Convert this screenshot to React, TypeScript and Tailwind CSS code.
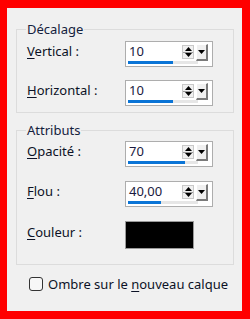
import React from "react";

const font = { fontFamily: '"Noto Sans", "Open Sans", sans-serif' };

function Spin({ value, bar }: { value: string; bar: number }) {
  return (
    <div className="flex h-[26px] w-[88px] flex-col border border-[#adadad] bg-white pl-[2px] pr-[4px] pt-[2px] pb-[2px]">
      <div className="flex h-[17px] items-start">
        <div className="flex-1 text-[13px] leading-[17px] text-[#1a1a40] pl-[1px] -mt-[1px]">{value}</div>
        <div className="mt-[1px] flex h-[14px] w-[12px] flex-col border border-[#c8c8c8] bg-[#f0f0f0]">
          <div className="flex flex-1 items-center justify-center border-b border-[#9a9a9a]">
            <svg width="7" height="4" viewBox="0 0 7 4"><path d="M3.5 0 L7 4 L0 4 Z" fill="#000" /></svg>
          </div>
          <div className="flex flex-1 items-center justify-center">
            <svg width="7" height="4" viewBox="0 0 7 4"><path d="M0 0 L7 0 L3.5 4 Z" fill="#000" /></svg>
          </div>
        </div>
        <div className="ml-[2px] flex h-[17px] w-[12px] items-center justify-center border-t border-l border-t-white border-l-white border-r-2 border-b-2 border-r-[#7a7a7a] border-b-[#7a7a7a] bg-[#f0f0f0]">
          <svg width="7" height="4" viewBox="0 0 7 4"><path d="M0 0 L7 0 L3.5 4 Z" fill="#000" /></svg>
        </div>
      </div>
      <div className="h-[3px] w-[70px] bg-[#e6e6e6]">
        <div className="h-full bg-[#0a74d6]" style={{ width: bar }} />
      </div>
    </div>
  );
}

function U({ c }: { c: string }) {
  return <span className="underline underline-offset-[2px] decoration-[1px]">{c}</span>;
}

export default function App() {
  return (
    <div className="h-[319px] w-[250px] bg-[#ff0000] pt-[8px] pl-[7px] pr-[8px] pb-[8px]" style={font}>
      <div className="flex h-full w-full flex-col bg-[#f0f0f0] text-[13px] text-[#0c1226]">
        <fieldset className="ml-[9px] mr-[8px] mt-[13px] border border-[#dcdcdc] pl-[10px] pb-[6px]">
          <legend className="ml-[-1px] px-[1px] leading-[16px] text-[#14213d]">Décalage</legend>
          <div className="mt-[4px] flex items-center">
            <div className="w-[98px] mb-[5px]"><U c="V" />ertical :</div>
            <Spin value="10" bar={45} />
          </div>
          <div className="mt-[13px] flex items-center">
            <div className="w-[98px] mb-[5px]"><U c="H" />orizontal :</div>
            <Spin value="10" bar={45} />
          </div>
        </fieldset>
        <fieldset className="ml-[9px] mr-[8px] mt-[9px] border border-[#dcdcdc] pl-[10px] pb-[15px]">
          <legend className="ml-[-1px] px-[1px] leading-[16px] text-[#14213d]">Attributs</legend>
          <div className="mt-[3px] flex items-center">
            <div className="w-[98px] mb-[5px]"><U c="O" />pacité :</div>
            <Spin value="70" bar={57} />
          </div>
          <div className="mt-[14px] flex items-center">
            <div className="w-[98px] mb-[5px]"><U c="F" />lou :</div>
            <Spin value="40,00" bar={33} />
          </div>
          <div className="mt-[14px] flex items-center">
            <div className="w-[98px] mb-[4px]"><U c="C" />ouleur :</div>
            <div className="h-[28px] w-[69px] border border-[#9a9a9a] bg-black" />
          </div>
        </fieldset>
        <div className="ml-[22px] mt-[11px] flex items-center">
          <div className="h-[14px] w-[14px] rounded-[3px] border-[1.5px] border-[#333] bg-[#f7f7f7]" />
          <div className="ml-[5px] leading-[16px]">Ombre sur le <U c="n" />ouveau calque</div>
        </div>
      </div>
    </div>
  );
}
